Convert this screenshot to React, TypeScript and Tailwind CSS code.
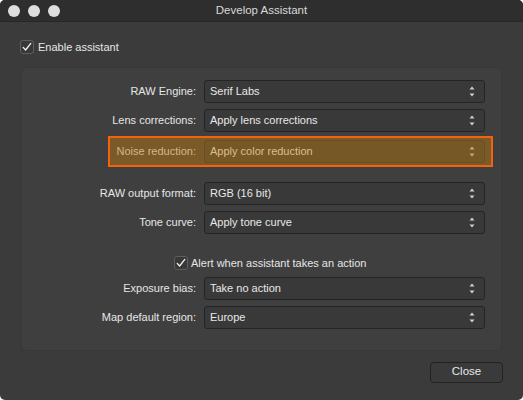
import React from "react";

const font = { fontFamily: '"Liberation Sans", Arial, sans-serif' };

function Arrows({ color = "#d0d0d0" }: { color?: string }) {
  return (
    <svg width="6" height="11" viewBox="0 0 6 11" className="shrink-0">
      <polygon points="0.5,3.5 3,0.5 5.5,3.5" fill={color} />
      <polygon points="0.5,7.5 3,10.5 5.5,7.5" fill={color} />
    </svg>
  );
}

function Check() {
  return (
    <span className="flex h-[14px] w-[14px] shrink-0 items-center justify-center rounded-[3px] border border-[#5e5e5e] bg-[#383838]">
      <svg width="12" height="12" viewBox="0 0 12 12">
        <path d="M2.2 6.4 L4.6 9 L9.8 2.4" fill="none" stroke="#f2f2f2" strokeWidth="1.3" strokeLinecap="round" strokeLinejoin="round" />
      </svg>
    </span>
  );
}

function Select({ value }: { value: string }) {
  return (
    <div className="flex h-[23px] w-[281px] items-center justify-between rounded-[3px] border border-[#242424] bg-[#393939] pl-[5px] pr-[9px] text-[#e8e8e8]">
      <span>{value}</span>
      <Arrows />
    </div>
  );
}

function Row({ label, value, className = "" }: { label: string; value: string; className?: string }) {
  return (
    <div className={`flex items-center ${className}`}>
      <div className="w-[182px] whitespace-nowrap pr-[8px] text-right text-[#e6e6e6]">{label}</div>
      <Select value={value} />
    </div>
  );
}

export default function App() {
  return (
    <div className="h-[400px] w-[523px] bg-white text-[11px]" style={font}>
      <div className="flex h-[400px] w-[523px] flex-col overflow-hidden rounded-[5px] bg-[#3b3b3b]">
        {/* title bar */}
        <div className="relative flex h-[22px] shrink-0 items-center justify-center border-b border-[#262626] bg-[#2e2e2e]">
          <div className="absolute left-[8px] top-[5px] flex gap-[8px]">
            <span className="h-[12px] w-[12px] rounded-full bg-[#dedede]" />
            <span className="h-[12px] w-[12px] rounded-full bg-[#dedede]" />
            <span className="h-[12px] w-[12px] rounded-full bg-[#dedede]" />
          </div>
          <span className="text-[11.5px] text-[#d9d9d9]">Develop Assistant</span>
        </div>

        {/* enable */}
        <div className="ml-[20px] mt-[17px] flex items-center gap-[4px] text-[#e6e6e6]">
          <Check />
          <span>Enable assistant</span>
        </div>

        {/* panel */}
        <div className="mx-[21px] mt-[11px] flex h-[284px] flex-col rounded-[5px] border border-[#383838] bg-[#3f3f3f] pt-[12px]">
          <Row label="RAW Engine:" value="Serif Labs" />
          <Row label="Lens corrections:" value="Apply lens corrections" className="mt-[6px]" />

          <div className="ml-[86px] mr-[8px] mt-[4px] flex h-[31px] items-center border-2 border-[#f5620d] bg-[#7a5a28] pr-[6px]">
            <div className="w-[94px] whitespace-nowrap pr-[8px] text-right text-[#d6b784]">Noise reduction:</div>
            <div className="flex h-[23px] w-[281px] items-center justify-between rounded-[3px] border border-[#6b4f22] bg-[#765726] pl-[5px] pr-[9px] text-[#dcbf8e]">
              <span>Apply color reduction</span>
              <Arrows color="#c9ab7a" />
            </div>
          </div>

          <Row label="RAW output format:" value="RGB (16 bit)" className="mt-[15px]" />
          <Row label="Tone curve:" value="Apply tone curve" className="mt-[6px]" />

          <div className="ml-[152px] mt-[21px] flex items-center gap-[3px] text-[#e6e6e6]">
            <Check />
            <span>Alert when assistant takes an action</span>
          </div>

          <Row label="Exposure bias:" value="Take no action" className="mt-[6px]" />
          <Row label="Map default region:" value="Europe" className="mt-[6px]" />
        </div>

        {/* footer */}
        <div className="mr-[20px] mt-[11px] flex justify-end">
          <button className="flex h-[21px] w-[73px] items-center justify-center rounded-[4px] border border-[#222222] bg-[#3a3a3a] text-[11.5px] text-[#e8e8e8]">
            Close
          </button>
        </div>
      </div>
    </div>
  );
}
